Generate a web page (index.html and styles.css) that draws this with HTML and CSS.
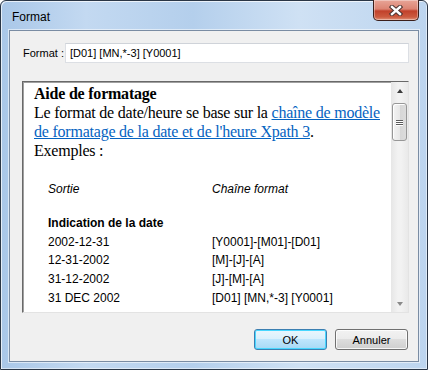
FILE: index.html
```html
<!DOCTYPE html>
<html lang="fr">
<head>
    <meta charset="UTF-8">
    <title>Format</title>
    <link rel="stylesheet" href="styles.css">
</head>
<body>
    <div class="window">
        <div class="titlebar">
            <span class="title">Format</span>
            <button class="close" type="button" aria-label="Fermer">
                <svg width="14" height="11" viewBox="0 0 14 11">
                    <path d="M3 2 L11 9 M11 2 L3 9" stroke="#4a3330" stroke-width="4.4" stroke-linecap="square" fill="none"/>
                    <path d="M3 2 L11 9 M11 2 L3 9" stroke="#fff" stroke-width="2.4" stroke-linecap="square" fill="none"/>
                </svg>
            </button>
        </div>

        <div class="client">
            <div class="format-row">
                <label for="fmt">Format :</label>
                <input id="fmt" type="text" value="[D01] [MN,*-3] [Y0001]">
            </div>

            <div class="help">
                <div class="help-body">
                    <h3>Aide de formatage</h3>
                    <p>Le format de date/heure se base sur la <a href="#">chaîne de modèle de formatage de la date et de l'heure Xpath 3</a>.</p>
                    <p>Exemples :</p>

                    <div class="examples">
                        <div class="head">Sortie</div>
                        <div class="head">Chaîne format</div>
                        <div class="group">Indication de la date</div>
                        <div>2002-12-31</div><div>[Y0001]-[M01]-[D01]</div>
                        <div>12-31-2002</div><div>[M]-[J]-[A]</div>
                        <div>31-12-2002</div><div>[J]-[M]-[A]</div>
                        <div>31 DEC 2002</div><div>[D01] [MN,*-3] [Y0001]</div>
                    </div>
                </div>
                <div class="scrollbar">
                    <div class="arrow up"></div>
                    <div class="track">
                        <div class="thumb"><span></span><span></span><span></span></div>
                    </div>
                    <div class="arrow down"></div>
                </div>
            </div>

            <div class="buttons">
                <button class="btn default" type="button">OK</button>
                <button class="btn" type="button">Annuler</button>
            </div>
        </div>
    </div>
</body>
</html>
```

FILE: styles.css
```css
body {
    margin: 0;
    background: #fff;
    font-family: 'Liberation Sans', Arial, sans-serif;
    font-size: 11px;
    color: #000;
}
.window {
    width: 428px;
    height: 370px;
    box-sizing: border-box;
    border: 1px solid #2a3646;
    border-radius: 6px 6px 0 0;
    padding: 0 8px 7px 8px;
    display: flex;
    flex-direction: column;
    background: linear-gradient(to right, #a9c7e8 0%, #c3d9f1 20%, #b4cfec 45%, #cfe1f4 70%, #bdd5ef 100%);
    box-shadow: inset 1px 1px 0 rgba(255, 255, 255, 0.7), inset -1px -1px 0 rgba(255, 255, 255, 0.5);
}
.titlebar {
    height: 29px;
    display: flex;
    align-items: flex-start;
}
.title {
    font-size: 12px;
    padding: 9px 0 0 3px;
    color: #000;
}
.close {
    margin: -1px 0 0 auto;
    width: 46px;
    height: 21px;
    padding: 0;
    border: 1px solid #3b1f1b;
    border-top: none;
    border-radius: 0 0 5px 5px;
    background: linear-gradient(to bottom, #e8a597 0%, #dc8473 45%, #c1412a 55%, #cc5b3f 85%, #e0937a 100%);
    box-shadow: inset 0 0 0 1px rgba(255, 255, 255, 0.35);
    display: flex;
    align-items: center;
    justify-content: center;
}
.client {
    flex: 1;
    background: #f0f0f0;
    border: 1px solid #7a8ca3;
    box-shadow: 0 0 0 1px rgba(255, 255, 255, 0.55);
    padding: 12px 9px 0 12px;
    display: flex;
    flex-direction: column;
}
.format-row {
    display: flex;
    align-items: center;
    height: 20px;
}
.format-row label {
    width: 42px;
    margin-left: 1px;
}
.format-row input {
    flex: 1;
    height: 20px;
    box-sizing: border-box;
    border: 1px solid #dcdfe4;
    border-top-color: #cfd3d9;
    background: #fff;
    font-family: 'Liberation Sans', Arial, sans-serif;
    font-size: 11px;
    padding: 0 4px;
    outline: none;
}
.help {
    margin-top: 18px;
    height: 232px;
    box-sizing: border-box;
    background: #fff;
    border: 1px solid;
    border-color: #696969 #e3e3e3 #e3e3e3 #696969;
    box-shadow: inset 1px 1px 0 #a0a0a0;
    display: flex;
    overflow: hidden;
}
.help-body {
    flex: 1;
    padding: 2px 6px 0 11px;
    font-family: 'Liberation Serif', 'Times New Roman', serif;
    font-size: 16px;
    line-height: 19px;
    letter-spacing: -0.22px;
    overflow: hidden;
}
.help-body h3 {
    margin: 0;
    font-size: 16px;
}
.help-body p {
    margin: 0;
}
.help-body a {
    color: #0563c1;
}
.examples {
    margin: 20px 0 0 14px;
    display: grid;
    grid-template-columns: 164px 1fr;
    font-family: 'Liberation Sans', Arial, sans-serif;
    font-size: 12px;
    line-height: 18.67px;
    letter-spacing: 0;
}
.examples .head {
    font-style: italic;
    margin-bottom: 15.3px;
}
.examples .group {
    grid-column: 1 / 3;
    font-weight: bold;
}
.scrollbar {
    width: 17px;
    display: flex;
    flex-direction: column;
    background: linear-gradient(to right, #e6e6e6, #f2f2f2 40%, #f2f2f2 60%, #e9e9e9);
}
.arrow {
    height: 17px;
    display: flex;
    align-items: center;
    justify-content: center;
}
.arrow::before {
    content: "";
    border-left: 3.5px solid transparent;
    border-right: 3.5px solid transparent;
}
.arrow.up::before {
    border-bottom: 4px solid #3c3c3c;
}
.arrow.down::before {
    border-top: 4px solid #8a8a8a;
}
.track {
    flex: 1;
    padding: 4px 0 0 0;
}
.thumb {
    height: 38px;
    margin: 0 1px;
    box-sizing: border-box;
    border: 1px solid #979797;
    border-radius: 3px;
    background: linear-gradient(to right, #f3f3f3, #e8e8e8 50%, #d6d6d6 51%, #dcdcdc);
    box-shadow: inset 1px 1px 0 #fff;
    display: flex;
    flex-direction: column;
    align-items: center;
    justify-content: center;
    gap: 1px;
}
.thumb span {
    width: 7px;
    height: 1px;
    background: #5a5a5a;
    box-shadow: 0 1px 0 #fff;
}
.buttons {
    margin-top: 16px;
    display: flex;
    justify-content: flex-end;
    gap: 8px;
    padding-right: 1px;
}
.btn {
    width: 73px;
    height: 21px;
    box-sizing: border-box;
    font-family: 'Liberation Sans', Arial, sans-serif;
    font-size: 11px;
    color: #000;
    border: 1px solid #707070;
    border-radius: 3px;
    background: linear-gradient(to bottom, #f2f2f2 0%, #ebebeb 49%, #dddddd 50%, #cfcfcf 100%);
    box-shadow: inset 0 0 0 1px rgba(255, 255, 255, 0.8);
    padding: 0;
}
.btn.default {
    border-color: #3c7fb1;
    background: linear-gradient(to bottom, #eaf6fd 0%, #d9f0fc 49%, #bee6fd 50%, #a7d9f5 100%);
    box-shadow: inset 0 0 0 1px #48d7ff;
}
```
